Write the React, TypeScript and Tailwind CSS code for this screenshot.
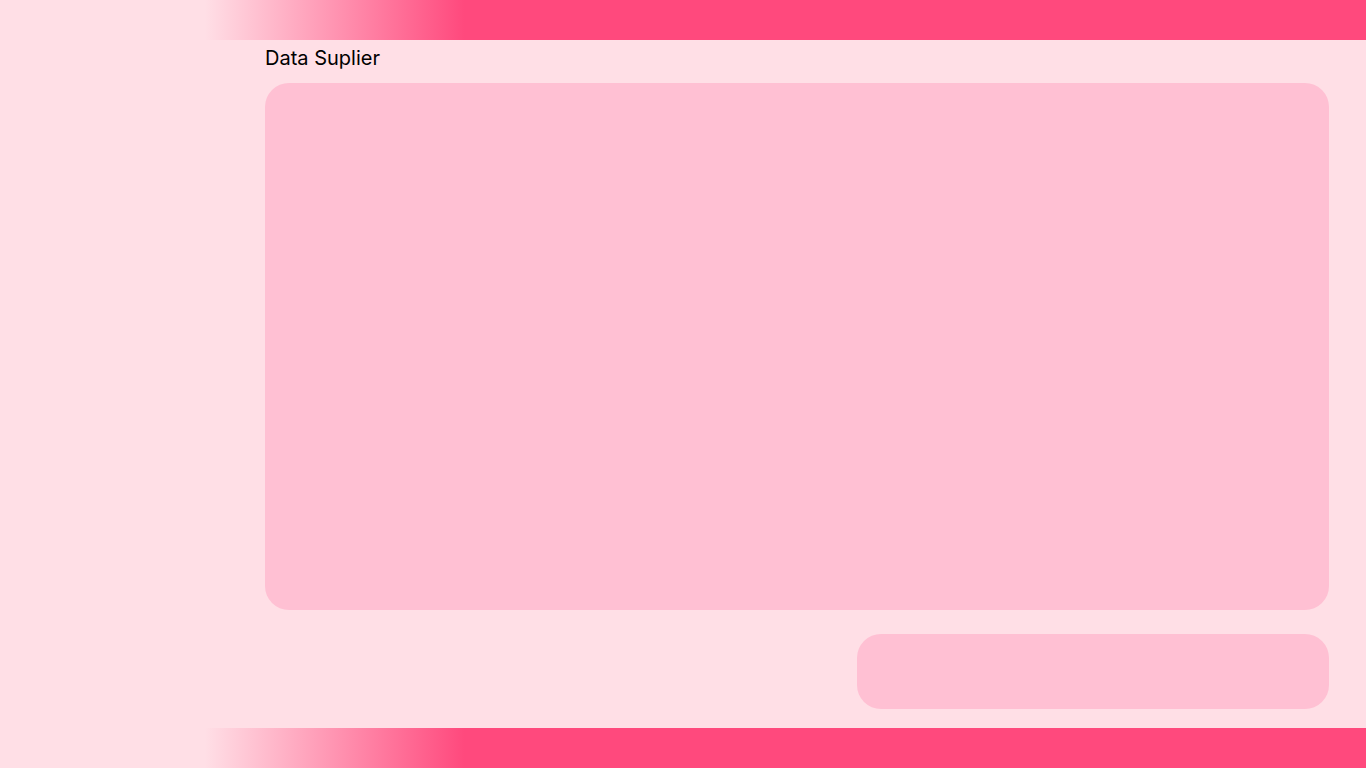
import React from "react";

export default function App() {
  const bar = "h-10 w-full shrink-0 bg-[linear-gradient(to_right,rgba(255,73,125,0)_15%,#ff497d_34%)]";
  return (
    <div className="flex h-screen w-full flex-col bg-[#ffdfe6] font-['Inter',sans-serif] text-black">
      <div className={bar} />
      <main className="flex flex-1 flex-col pl-[265px] pr-[37px] pt-1">
        <h1 className="text-xl leading-7 font-normal">Data Suplier</h1>
        <div className="mt-[11px] h-[527px] rounded-3xl bg-[#ffc0d3]" />
        <div className="mt-6 flex justify-end">
          <div className="h-[75px] w-[472px] rounded-3xl bg-[#ffc0d3]" />
        </div>
      </main>
      <div className={bar} />
    </div>
  );
}
